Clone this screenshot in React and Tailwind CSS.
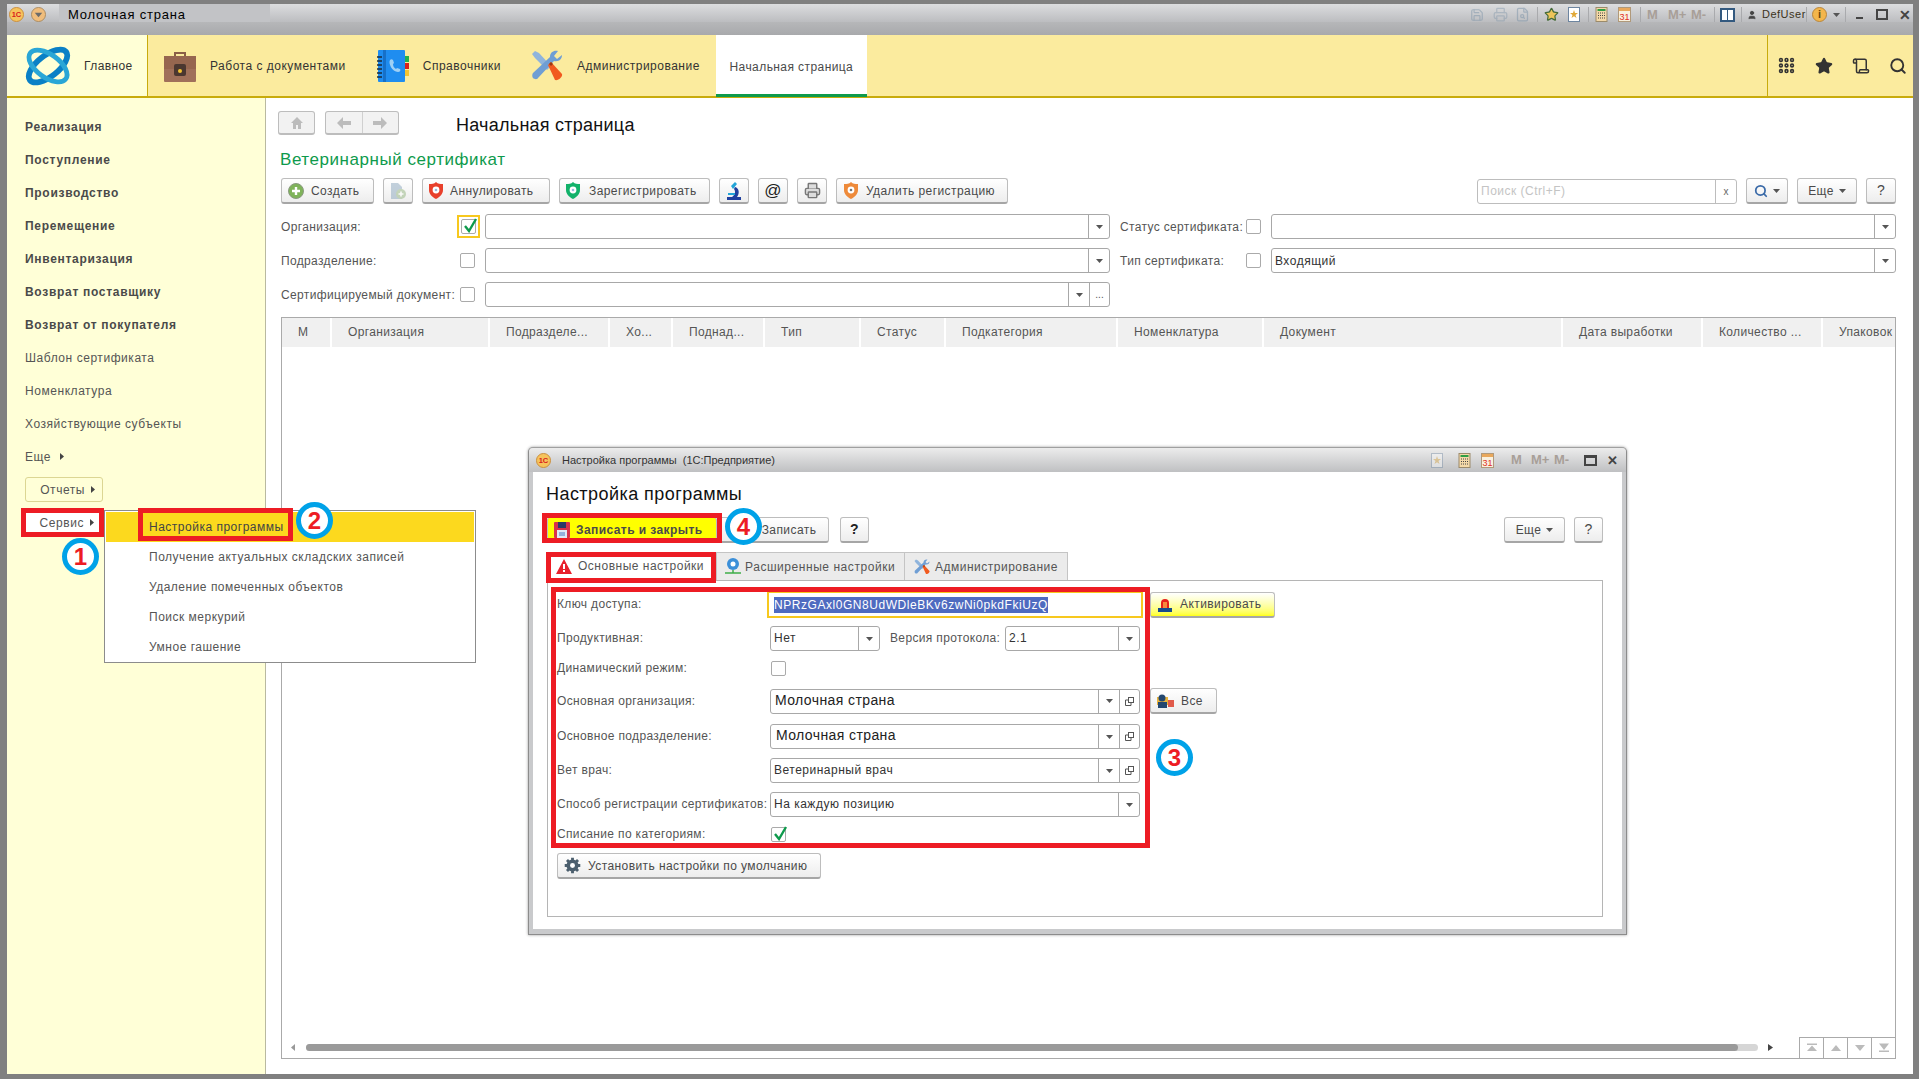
import { Grip, Search, Star, Scroll, Printer, FileSearch, Save, User } from "lucide-react";

const sideBold = ["Реализация", "Поступление", "Производство", "Перемещение", "Инвентаризация", "Возврат поставщику", "Возврат от покупателя"];
const sidePlain = ["Шаблон сертификата", "Номенклатура", "Хозяйствующие субъекты"];

const columns = [
  ["М", "w-[50px]"],
  ["Организация", "w-[158px]"],
  ["Подразделе...", "w-[120px]"],
  ["Хо...", "w-[63px]"],
  ["Поднад...", "w-[92px]"],
  ["Тип", "w-[96px]"],
  ["Статус", "w-[85px]"],
  ["Подкатегория", "w-[172px]"],
  ["Номенклатура", "w-[146px]"],
  ["Документ", "w-[299px]"],
  ["Дата выработки", "w-[140px]"],
  ["Количество ...", "w-[120px]"],
  ["Упаковок", "w-[75px]"],
];

const menuItems = ["Получение актуальных складских записей", "Удаление помеченных объектов", "Поиск меркурий", "Умное гашение"];

const Caret = ({ className = "" }) => (
  <svg width="7" height="4" viewBox="0 0 7 4" className={className}><path d="M0 0h7L3.5 4z" fill="#555" /></svg>
);

const RightCaret = ({ className = "ml-[6px]" }) => (
  <svg width="4" height="7" viewBox="0 0 4 7" className={`inline-block ${className}`}><path d="M0 0l4 3.5L0 7z" fill="#444" /></svg>
);

const Logo1C = () => (
  <svg width="15" height="15" viewBox="0 0 16 16">
    <circle cx="8" cy="8" r="7.5" fill="#f6c35c" stroke="#c98c3a" />
    <text x="8" y="11" textAnchor="middle" fontSize="8" fontWeight="700" fill="#d8201a" fontFamily="Liberation Sans">1С</text>
  </svg>
);

const MainLogo = () => (
  <svg width="48" height="44" viewBox="0 0 50 46">
    <ellipse cx="25" cy="23" rx="24" ry="11" transform="rotate(-38 25 23)" fill="none" stroke="#0a80c6" strokeWidth="6" />
    <ellipse cx="25" cy="23" rx="23" ry="12" transform="rotate(36 25 23)" fill="none" stroke="#2aa6d6" strokeWidth="5" />
  </svg>
);

const Briefcase = () => (
  <svg width="32" height="32" viewBox="0 0 32 32">
    <path d="M10 6V2h12v4h-2V4h-8v2z" fill="#8a5e46" />
    <rect x="0" y="6" width="32" height="26" rx="1" fill="#a0705a" />
    <rect x="0" y="6" width="32" height="13" fill="#96664f" />
    <rect x="10" y="14" width="12" height="12" rx="2" fill="#4b3730" />
    <circle cx="16" cy="21" r="2" fill="#f2c230" />
  </svg>
);

const Phonebook = () => (
  <svg width="32" height="32" viewBox="0 0 32 32">
    <rect x="1" y="0" width="27" height="32" rx="1" fill="#1f8df0" />
    <rect x="6" y="0" width="3" height="32" fill="#1670c8" />
    <g stroke="#1d2b3a" strokeWidth="1.4">
      <path d="M0 7h5M0 11h5M0 15h5M0 19h5M0 23h5M0 27h5" />
    </g>
    <rect x="28" y="6" width="4" height="6" fill="#22b14c" />
    <rect x="28" y="13" width="4" height="6" fill="#d8201a" />
    <rect x="28" y="20" width="4" height="6" fill="#f4c430" />
    <path d="M13 10c-2 3 2 12 8 12 2 0 3-2 2-3l-3-1-1 1c-2-1-3-3-3-5l1-1-1-3c-1-1-2-1-3 0z" fill="#9fd0f5" />
  </svg>
);

const Tools = ({ size = 32 }) => (
  <svg width={size} height={size} viewBox="0 0 32 32">
    <path d="M1 4l3-3 4 2 12 13-4 4L4 8z" fill="#8fb4dc" />
    <path d="M31 5l-5 4-3-3 4-5c-4-1-8 1-8 6l-17 16c-1 1-1 4 0 5s4 2 5 0l16-17c5 1 8-2 8-6z" fill="#6f9ed4" />
    <path d="M17 15l3-3 11 12c1 3-4 7-7 6z" fill="#f15a1e" />
    <path d="M18 14l2-2 2 2-2 2z" fill="#9a3b12" />
  </svg>
);

const Shield = ({ color, eye = "#9bd" }) => (
  <svg width="14" height="17" viewBox="0 0 14 17">
    <path d="M7 0c2 2 4 2 7 2v6c0 4-3 7-7 9-4-2-7-5-7-9V2c3 0 5 0 7-2z" fill={color} />
    <circle cx="7" cy="8" r="3.4" fill="#fff" />
    <circle cx="7" cy="8" r="1.3" fill={eye} />
  </svg>
);

const PlusCircle = () => (
  <svg width="16" height="16" viewBox="0 0 16 16">
    <circle cx="8" cy="8" r="7.5" fill="#7fb35a" stroke="#8a9a80" />
    <path d="M8 4v8M4 8h8" stroke="#fff" strokeWidth="2.4" />
  </svg>
);

const CopyDoc = () => (
  <svg width="18" height="18" viewBox="0 0 18 18" className="opacity-50">
    <path d="M2 1h7l4 4v12H2z" fill="#8aa6bd" />
    <circle cx="12" cy="12" r="5" fill="#93b57f" />
    <path d="M12 9.5v5M9.5 12h5" stroke="#fff" strokeWidth="1.6" />
  </svg>
);

const Microscope = () => (
  <svg width="16" height="19" viewBox="0 0 16 19">
    <path d="M1 16h14v3H1z" fill="#1f3f9e" />
    <path d="M5 5l4-4 2 2-4 5z" fill="#22a5d8" />
    <path d="M9 6c4 1 5 6 2 10H6c3-2 4-5 2-8z" fill="#1f3f9e" />
    <rect x="2" y="12" width="7" height="2" fill="#22a5d8" />
  </svg>
);

const Siren = () => (
  <svg width="14" height="15" viewBox="0 0 14 15">
    <path d="M3 11V6a4 4 0 018 0v5z" fill="#e8201c" />
    <rect x="5" y="5" width="4" height="6" fill="#f68a3c" />
    <rect x="0" y="11" width="14" height="4" fill="#164a8c" />
  </svg>
);

const Gear = () => (
  <svg width="17" height="17" viewBox="0 0 24 24">
    <circle cx="12" cy="12" r="8.5" fill="#4c5f6e" />
    <path d="M12 1v22M1 12h22M4.200 4.200l15.600 15.600M19.800 4.200L4.200 19.800" stroke="#4c5f6e" strokeWidth="4" />
    <circle cx="12" cy="12" r="3.5" fill="#fff" />
  </svg>
);

const Floppy = () => (
  <svg width="16" height="16" viewBox="0 0 16 16">
    <rect width="16" height="16" rx="1" fill="#d8324a" />
    <rect x="4" y="0" width="8" height="6" fill="#2b3a67" />
    <rect x="3" y="8" width="10" height="8" fill="#dfe9f5" />
    <path d="M5 11h6M5 13h6" stroke="#4a78c0" />
  </svg>
);

const Warning = () => (
  <svg width="16" height="15" viewBox="0 0 16 15">
    <path d="M8 0l8 15H0z" fill="#e8202c" />
    <path d="M7 5h2v5H7zM7 11h2v2H7z" fill="#fff" />
  </svg>
);

const Network = () => (
  <svg width="16" height="17" viewBox="0 0 16 17">
    <circle cx="8" cy="6" r="6" fill="#3b8fd8" />
    <circle cx="8" cy="6" r="2.5" fill="#fff" />
    <path d="M0 15h16M8 12v3" stroke="#3fae49" strokeWidth="1.5" />
  </svg>
);

const People = () => (
  <svg width="17" height="14" viewBox="0 0 17 14">
    <rect x="0" y="3" width="11" height="8" fill="#e8b33c" />
    <circle cx="5" cy="4" r="3.5" fill="#24476f" />
    <rect x="1" y="8" width="9" height="6" fill="#24476f" />
    <rect x="11" y="6" width="6" height="7" fill="#e05a4a" />
  </svg>
);

const OpenIcon = () => (
  <svg width="9" height="9" viewBox="0 0 9 9" fill="none" stroke="#555">
    <rect x="3.5" y="0.5" width="5" height="5" />
    <path d="M3.500 3H.5v5.500H6V5.500" />
  </svg>
);

const Check = () => (
  <svg width="15" height="15" viewBox="0 0 15 15" className="absolute left-[1px] -top-[2px]">
    <path d="M2 8l4 5 7-12" fill="none" stroke="#0e9a4c" strokeWidth="2.4" />
  </svg>
);

const Checkbox = ({ checked }) => (
  <span className="relative block w-[15px] h-[15px] rounded-[2px] border border-[#aaa] bg-white">{checked && <Check />}</span>
);

const Btn = ({ w, yellow, className = "justify-center gap-[5px]", children }) => (
  <div className={`${w} h-[26px] shrink-0 flex items-center rounded-[3px] border border-[#bdbdbd] border-b-2 border-b-[#a6a6a6] text-[12px] tracking-[0.42px] text-[#4a4a4a] ${yellow ? "bg-[#ffff00]" : "bg-linear-to-b from-white to-[#ededed]"} ${className}`}>
    {children}
  </div>
);

const Field = ({ w = "w-full", value, big, caret = true, open, dots, className = "pl-[3px] pb-[2px]" }) => (
  <div className={`${w} h-[25px] flex rounded-[3px] border border-[#a8a8a8] bg-white`}>
    <div className={`flex-1 flex items-center ${className} ${big ? "text-[14px] tracking-[0.4px] text-[#222]" : "text-[12px] tracking-[0.5px] text-[#333]"}`}>{value}</div>
    {caret && <div className="w-[21px] flex items-center justify-center border-l border-[#a8a8a8]"><Caret /></div>}
    {open && <div className="w-[20px] flex items-center justify-center border-l border-[#a8a8a8]"><OpenIcon /></div>}
    {dots && <div className="w-[20px] flex items-center justify-center border-l border-[#a8a8a8] text-[10px] text-[#555]">...</div>}
  </div>
);

const Label = ({ className = "", children }) => (
  <span className={`shrink-0 text-[12px] tracking-[0.35px] text-[#555] whitespace-nowrap ${className}`}>{children}</span>
);

const FormRow = ({ label, className = "", children }) => (
  <div className={`flex items-center ${className}`}>
    <Label className="w-[213px] pb-[1px]">{label}</Label>
    {children}
  </div>
);

const SectionTab = ({ icon, label, className = "" }) => (
  <div className={`flex items-center h-full shrink-0 ${className}`}>
    {icon}
    <span className="text-[12px] tracking-[0.5px] text-[#333] whitespace-nowrap">{label}</span>
  </div>
);

const Calc = ({ className = "" }) => (
  <svg width="13" height="15" viewBox="0 0 12 15" className={className}>
    <rect x=".5" y=".5" width="11" height="14" fill="#f4d9a8" stroke="#9b8a6a" />
    <rect x="2" y="2" width="8" height="2" fill="#2f9e44" />
    <path d="M2.500 6h7M2.500 8.500h7M2.500 11h7" stroke="#444" strokeDasharray="1 1" />
  </svg>
);

const Cal = ({ className = "" }) => (
  <svg width="13" height="15" viewBox="0 0 13 15" className={className}>
    <rect x=".5" y=".5" width="12" height="14" fill="#f9f1df" stroke="#b0997a" />
    <rect x="1" y="1" width="11" height="3" fill="#e9a85c" />
    <text x="6.5" y="13" textAnchor="middle" fontSize="9" fill="#e0301e" fontFamily="Liberation Sans">31</text>
  </svg>
);

const DocStar = ({ className = "" }) => (
  <svg width="12" height="15" viewBox="0 0 12 15" className={className}>
    <rect x=".5" y=".5" width="11" height="14" fill="#fff" stroke="#6d85a0" />
    <path d="M6 3l1 3h3L7.500 8l1 3L6 9.200 3.500 11l1-3L2 6h3z" fill="#e0a838" />
  </svg>
);

const Divider = ({ className = "" }) => <span className={`w-px h-[16px] shrink-0 bg-[#a9aaad] ${className}`} />;

const TitleBar = () => (
  <div className="h-[31px] shrink-0 flex flex-col">
    <div className="h-[18px] flex items-center bg-linear-to-b from-[#dcdddf] to-[#bcbdc0]">
      <div className="flex items-center gap-[7px] pl-[2px] pt-[2px] w-[52px] shrink-0">
        <Logo1C />
        <svg width="15" height="15" viewBox="0 0 16 16">
          <circle cx="8" cy="8" r="7.5" fill="#f0bd7c" stroke="#a98a60" />
          <path d="M4 6h8l-4 5z" fill="#6b6b6b" />
        </svg>
      </div>
      <div className="w-[211px] h-full flex items-center pl-[9px] pt-[3px] bg-[#c2c3c6] text-[13px] tracking-[0.8px] text-black">Молочная страна</div>
      <div className="ml-auto h-full flex items-center pr-[4px] pt-[3px] text-[#7b93a8]">
        <Save size={14} className="opacity-50" />
        <Printer size={15} className="ml-[9px] opacity-40" />
        <FileSearch size={15} className="ml-[7px] opacity-50" />
        <Divider className="ml-[7px]" />
        <Star size={15} fill="#ecc45a" stroke="#446b3a" className="ml-[6px]" />
        <DocStar className="ml-[9px]" />
        <Divider className="ml-[8px]" />
        <Calc className="ml-[6px]" />
        <Cal className="ml-[10px]" />
        <Divider className="ml-[9px]" />
        <span className="ml-[6px] w-[10px] text-[13px] font-bold text-[#a89f98]">M</span>
        <span className="ml-[11px] w-[16px] text-[13px] font-bold text-[#a89f98] whitespace-nowrap">M+</span>
        <span className="ml-[7px] w-[16px] text-[13px] font-bold text-[#a89f98] whitespace-nowrap">M-</span>
        <Divider className="ml-[7px]" />
        <span className="ml-[5px] w-[15px] h-[14px] bg-white border-2 border-[#33597f] flex justify-center"><span className="w-px h-full bg-[#33597f]" /></span>
        <Divider className="ml-[6px]" />
        <User size={10} fill="#444" stroke="#444" className="ml-[5px]" />
        <span className="ml-[5px] w-[39px] text-[11px] tracking-[0.5px] text-[#3b3320] whitespace-nowrap">DefUser</span>
        <Divider className="ml-[5px]" />
        <span className="ml-[5px] w-[15px] h-[15px] rounded-full bg-[#f3b64c] border border-[#b8863c] text-[11px] font-bold leading-[13px] text-center text-[#6a4a10]">i</span>
        <Caret className="ml-[6px] mr-[2px]" />
        <Divider className="ml-[3px]" />
        <span className="ml-[10px] w-[7px] h-[2px] mt-[7px] bg-[#444]" />
        <span className="ml-[13px] w-[12px] h-[11px] border-2 border-[#444]" />
        <span className="ml-[11px] w-[10px] text-[14px] font-bold leading-none text-[#444]">✕</span>
      </div>
    </div>
    <div className="flex-1 bg-linear-to-b from-[#b6b7b9] to-[#a8a9ac]" />
  </div>
);

const SectionBar = () => (
  <div className="h-[63px] shrink-0 flex bg-[#fbeb9e] border-b-2 border-[#c8ab0c]">
    <div className="w-[141px] flex items-center pl-[17px] gap-[12px] shrink-0 bg-[#ffffd6] border-r border-[#c8ab0c]">
      <MainLogo />
      <span className="text-[12px] tracking-[0.4px] text-[#333]">Главное</span>
    </div>
    <SectionTab icon={<span className="ml-[16px] mr-[14px]"><Briefcase /></span>} label="Работа с документами" />
    <SectionTab icon={<span className="ml-[31px] mr-[14px]"><Phonebook /></span>} label="Справочники" />
    <SectionTab icon={<span className="ml-[30px] mr-[14px]"><Tools /></span>} label="Администрирование" />
    <div className="ml-[16px] w-[151px] shrink-0 flex items-center justify-center pt-[4px] bg-white border-b-[3px] border-[#0e9a4c] -mb-[1px] text-[12px] tracking-[0.42px] text-[#4a4a4a]">Начальная страница</div>
    <div className="ml-auto w-[146px] shrink-0 flex items-center gap-[19px] pl-[9px] border-l border-[#c8ab0c] text-[#333]">
      <Grip size={19} strokeWidth={3.5} />
      <Star size={18} fill="#333" />
      <Scroll size={18} />
      <Search size={18} strokeWidth={2.5} />
    </div>
  </div>
);

const Sidebar = () => (
  <div className="w-[259px] shrink-0 bg-[#ffffd7] border-r border-[#b9b9a0] pt-[12px] pl-[18px] flex flex-col">
    {sideBold.map((t) => (
      <div key={t} className="h-[33px] flex items-center font-bold text-[12px] tracking-[0.7px] text-[#4a4a4a]">{t}</div>
    ))}
    {sidePlain.map((t) => (
      <div key={t} className="h-[33px] flex items-center text-[12px] tracking-[0.55px] text-[#555]">{t}</div>
    ))}
    <div className="h-[33px] flex items-center text-[12px] tracking-[0.55px] text-[#555]">Еще <RightCaret className="ml-[9px]" /></div>
    <div className="w-[78px] h-[25px] mt-[4px] flex items-center justify-end pr-[7px] rounded-[3px] border border-[#dcd693] text-[12px] tracking-[0.55px] text-[#555]">Отчеты<RightCaret /></div>
    <div className="w-[75px] h-[25px] mt-[8px] flex items-center justify-end pr-[6px] bg-white text-[12px] tracking-[0.55px] text-[#555]">Сервис<RightCaret /></div>
  </div>
);

const Filters = () => (
  <div className="mt-[10px] flex flex-col gap-[9px]">
    <div className="flex items-center">
      <Label className="w-[176px]">Организация:</Label>
      <div className="w-[28px]"><span className="block w-[23px] p-[2px] border-2 border-[#f7c81e] -mt-[1px]"><Checkbox checked /></span></div>
      <Field w="w-[625px]" />
      <Label className="w-[126px] ml-[10px]">Статус сертификата:</Label>
      <div className="w-[25px]"><Checkbox /></div>
      <Field w="flex-1" />
    </div>
    <div className="flex items-center">
      <Label className="w-[176px]">Подразделение:</Label>
      <div className="w-[28px] pl-[3px]"><Checkbox /></div>
      <Field w="w-[625px]" />
      <Label className="w-[126px] ml-[10px]">Тип сертификата:</Label>
      <div className="w-[25px]"><Checkbox /></div>
      <Field w="flex-1" value="Входящий" className="pl-[3px]" />
    </div>
    <div className="flex items-center">
      <Label className="w-[176px]">Сертифицируемый документ:</Label>
      <div className="w-[28px] pl-[3px]"><Checkbox /></div>
      <Field w="w-[625px]" dots />
    </div>
  </div>
);

const Toolbar = () => (
  <div className="mt-[8px] flex items-center gap-[9px]">
    <Btn w="w-[93px]" className="justify-start pl-[6px] gap-[7px]"><PlusCircle />Создать</Btn>
    <Btn w="w-[30px]" className="justify-center"><CopyDoc /></Btn>
    <Btn w="w-[128px]" className="justify-start pl-[6px] gap-[7px]"><Shield color="#e8402c" />Аннулировать</Btn>
    <Btn w="w-[151px]" className="justify-start pl-[6px] gap-[9px]"><Shield color="#12b26a" />Зарегистрировать</Btn>
    <Btn w="w-[30px]" className="justify-center"><Microscope /></Btn>
    <Btn w="w-[30px]" className="justify-center text-[17px] text-[#222]">@</Btn>
    <Btn w="w-[30px]" className="justify-center"><Printer size={17} stroke="#777" fill="#ddd" /></Btn>
    <Btn w="w-[172px]" className="justify-start pl-[7px] gap-[8px]"><Shield color="#ee8a3a" eye="#777" />Удалить регистрацию</Btn>
    <div className="ml-auto w-[260px] h-[25px] flex rounded-[3px] border border-[#bdbdbd]">
      <span className="flex-1 flex items-center pl-[3px] text-[12px] tracking-[0.5px] text-[#c4c4c4]">Поиск (Ctrl+F)</span>
      <span className="w-[21px] flex items-center justify-center border-l border-[#bdbdbd] text-[10px] text-[#666]">x</span>
    </div>
    <Btn w="w-[42px]"><Search size={14} stroke="#3a6aa8" strokeWidth={3} /><Caret /></Btn>
    <Btn w="w-[60px]">Еще<Caret /></Btn>
    <Btn w="w-[30px]" className="justify-center text-[14px]">?</Btn>
  </div>
);

const Table = () => (
  <div className="mt-[10px] flex-1 flex flex-col border border-[#aaa] overflow-hidden">
    <div className="h-[29px] flex bg-[#f0f0f0]">
      {columns.map(([t, w]) => (
        <div key={t} className={`${w} shrink-0 flex items-center pl-[16px] pb-[1px] border-r-2 border-white text-[12px] tracking-[0.35px] text-[#555] whitespace-nowrap overflow-hidden`}>{t}</div>
      ))}
    </div>
    <div className="flex-1" />
    <div className="h-[21px] flex items-center">
      <svg width="4" height="7" viewBox="0 0 4 7" className="ml-[9px]"><path d="M4 0L0 3.5 4 7z" fill="#999" /></svg>
      <div className="ml-[11px] w-[1452px] h-[7px] rounded-full bg-[#d6d6d6]">
        <div className="w-[1432px] h-full rounded-full bg-[#9a9a9a]" />
      </div>
      <svg width="5" height="7" viewBox="0 0 5 7" className="ml-[10px]"><path d="M0 0l5 3.5L0 7z" fill="#444" /></svg>
      <div className="ml-auto h-full flex border-t border-[#aaa]">
        {["M2 1.500h10V3H2zM7 3.500l5 5.500H2z", "M7 3l5 6H2z", "M2 3h10L7 9z", "M2 1.500h10L7 8zM2 8.500h10V10H2z"].map((d) => (
          <div key={d} className="w-[24px] flex items-center justify-center border-l border-[#aaa]">
            <svg width="14" height="12" viewBox="0 0 14 12"><path d={d} fill="#bbb" /></svg>
          </div>
        ))}
      </div>
    </div>
  </div>
);

const Dialog = () => (
  <div className="absolute left-[528px] top-[447px] w-[1099px] h-[488px] flex flex-col rounded-t-[5px] border border-[#8c8c8c] border-t-[#a0a0a0] bg-[#c9cacc] shadow-[0_0_3px_#999]">
    <div className="h-[24px] shrink-0 flex items-center pl-[7px] bg-linear-to-b from-[#ececec] to-[#bfc0c2] rounded-t-[4px]">
      <Logo1C />
      <span className="ml-[11px] text-[11px] text-[#333]">Настройка программы&nbsp; (1С:Предприятие)</span>
      <div className="ml-auto flex items-center pr-[10px]">
        <DocStar className="opacity-40" />
        <Calc className="ml-[15px]" />
        <Cal className="ml-[10px]" />
        <span className="ml-[17px] w-[10px] text-[13px] font-bold text-[#a89f98]">M</span>
        <span className="ml-[10px] w-[16px] text-[13px] font-bold text-[#a89f98] whitespace-nowrap">M+</span>
        <span className="ml-[7px] w-[15px] text-[13px] font-bold text-[#a89f98] whitespace-nowrap">M-</span>
        <span className="w-[13px] h-[11px] ml-[15px] border-2 border-t-[3px] border-[#444]" />
        <span className="ml-[10px] w-[9px] text-[13px] font-bold leading-none text-[#444]">✕</span>
      </div>
    </div>
    <div className="flex-1 mx-[4px] mb-[5px] bg-white pl-[14px] pr-[19px] flex flex-col">
      <div className="h-[45px] flex items-center pb-[1px] pt-[1px] -ml-[1px] text-[18px] text-[#111] tracking-[0.45px]">Настройка программы</div>
      <div className="flex items-center">
        <Btn w="w-[170px]" yellow className="font-bold justify-start pl-[6px] gap-[6px] tracking-[0.9px]"><Floppy />Записать и закрыть</Btn>
        <Btn w="w-[112px]" className="justify-center"><span className="ml-[32px]">Записать</span></Btn>
        <Btn w="w-[29px]" className="justify-center ml-[11px] text-[14px] font-bold text-[#222]">?</Btn>
        <Btn w="w-[61px]" className="justify-center gap-[5px] ml-auto">Еще<Caret /></Btn>
        <Btn w="w-[29px]" className="justify-center ml-[9px] text-[14px]">?</Btn>
      </div>
      <div className="mt-[9px] h-[28px] flex">
        <div className="w-[169px] flex items-center pl-[9px] gap-[6px] text-[12px] tracking-[0.5px] text-[#555] bg-white"><Warning />Основные настройки</div>
        <div className="w-[189px] flex items-center pl-[8px] gap-[4px] text-[12px] tracking-[0.55px] text-[#555] bg-[#ebebeb] border border-b-0 border-[#c4c4c4]"><Network />Расширенные настройки</div>
        <div className="w-[163px] flex items-center pl-[9px] gap-[5px] text-[12px] tracking-[0.5px] text-[#555] bg-[#ebebeb] border border-b-0 border-l-0 border-[#c4c4c4]"><Tools size={16} />Администрирование</div>
      </div>
      <div className="h-[337px] border border-[#b5b5b5] pl-[9px] pt-[10px] flex flex-col">
        <FormRow label="Ключ доступа:" className="h-[27px]">
          <div className="w-[376px] h-[27px] -ml-[3px] flex items-center pl-[5px] border-2 border-[#f7c81e] text-[12px] tracking-[0.55px]">
            <span className="bg-[#4f6bc0] text-white leading-[16px]">NPRzGAxl0GN8UdWDleBKv6zwNi0pkdFkiUzQ</span>
          </div>
          <Btn w="w-[125px]" className="ml-[7px] justify-start pl-[7px] gap-[8px] bg-linear-to-b from-[#ffff33] to-[#ffff00]"><Siren />Активировать</Btn>
        </FormRow>
        <FormRow label="Продуктивная:" className="mt-[8px]">
          <Field w="w-[110px]" value="Нет" />
          <Label className="ml-[10px] mr-[2px] w-[113px] pb-[1px]">Версия протокола:</Label>
          <Field w="w-[135px]" value="2.1" />
        </FormRow>
        <FormRow label="Динамический режим:" className="mt-[10px] h-[15px]">
          <span className="ml-[1px]"><Checkbox /></span>
        </FormRow>
        <FormRow label="Основная организация:" className="mt-[12px]">
          <Field w="w-[370px]" value="Молочная страна" big open className="pl-[4px] pb-[2px]" />
          <Btn w="w-[67px]" className="ml-[10px] justify-start pl-[6px] gap-[7px]"><People />Все</Btn>
        </FormRow>
        <FormRow label="Основное подразделение:" className="mt-[10px]">
          <Field w="w-[370px]" value="Молочная страна" big open className="pl-[5px] pb-[2px]" />
        </FormRow>
        <FormRow label="Вет врач:" className="mt-[9px]">
          <Field w="w-[370px]" value="Ветеринарный врач" open />
        </FormRow>
        <FormRow label="Способ регистрации сертификатов:" className="mt-[9px]">
          <Field w="w-[370px]" value="На каждую позицию" />
        </FormRow>
        <FormRow label="Списание по категориям:" className="mt-[10px] h-[15px]">
          <span className="ml-[1px]"><Checkbox checked /></span>
        </FormRow>
        <Btn w="w-[264px]" className="mt-[11px] justify-start pl-[6px] gap-[7px]"><Gear />Установить настройки по умолчанию</Btn>
      </div>
    </div>
  </div>
);

const Menu = () => (
  <div className="absolute left-[104px] top-[510px] w-[372px] h-[153px] bg-white border border-[#8c8c8c] flex flex-col px-px pt-px">
    <div className="h-[30px] flex items-center pl-[43px] bg-[#fcd91e] text-[12px] tracking-[0.5px] text-[#444]">Настройка программы</div>
    {menuItems.map((t) => (
      <div key={t} className="h-[30px] flex items-center pl-[43px] text-[12px] tracking-[0.5px] text-[#555]">{t}</div>
    ))}
  </div>
);

const RedBox = ({ className }) => (
  <div className={`absolute border-[5px] border-[#ed1c24] ${className}`} />
);

const Badge = ({ className, n }) => (
  <div className={`absolute flex items-center justify-center w-[37px] h-[37px] rounded-full bg-white border-[5px] border-[#00a2e8] font-bold text-[24px] leading-none text-[#ed1c24] ${className}`}>{n}</div>
);

export default function App() {
  return (
    <div className="relative w-[1919px] h-[1079px] overflow-hidden bg-[#808080] pt-[4px] pl-[7px] pr-[6px] pb-[5px] flex flex-col font-['Liberation_Sans',Arial,sans-serif]">
      <TitleBar />
      <SectionBar />
      <div className="flex-1 min-h-0 flex">
        <Sidebar />
        <div className="flex-1 min-w-0 bg-white pl-[15px] pr-[17px] pb-[15px] pt-[13px] flex flex-col">
          <div className="flex items-center -ml-[3px] h-[24px]">
            <div className="w-[37px] h-[24px] flex items-center justify-center rounded-[3px] border border-[#bdbdbd] border-b-2 bg-[#f2f2f2]">
              <svg width="14" height="14" viewBox="0 0 14 14"><path d="M7 1l6 6h-2v6H8V9H6v4H3V7H1z" fill="#bcbcbc" /></svg>
            </div>
            <div className="ml-[10px] w-[74px] h-[24px] flex rounded-[3px] border border-[#bdbdbd] border-b-2 bg-[#f2f2f2]">
              <div className="flex-1 flex items-center justify-center border-r border-[#d0d0d0]">
                <svg width="14" height="12" viewBox="0 0 14 12"><path d="M6 0v4h8v4H6v4L0 6z" fill="#bcbcbc" /></svg>
              </div>
              <div className="flex-1 flex items-center justify-center">
                <svg width="14" height="12" viewBox="0 0 14 12"><path d="M8 0v4H0v4h8v4l6-6z" fill="#bcbcbc" /></svg>
              </div>
            </div>
            <h1 className="ml-[57px] mt-[3px] text-[18px] tracking-[0.25px] leading-none text-[#111]">Начальная страница</h1>
          </div>
          <div className="mt-[15px] -ml-[1px] h-[20px] flex items-center text-[17px] tracking-[0.55px] text-[#0e9a4c]">Ветеринарный сертификат</div>
          <Toolbar />
          <Filters />
          <Table />
        </div>
      </div>
      <Dialog />
      <Menu />
      <RedBox className="left-[21px] top-[508px] w-[83px] h-[29px]" />
      <RedBox className="left-[138px] top-[508px] w-[155px] h-[33px]" />
      <RedBox className="left-[542px] top-[513px] w-[180px] h-[30px]" />
      <RedBox className="left-[546px] top-[552px] w-[170px] h-[31px]" />
      <RedBox className="left-[551px] top-[587px] w-[599px] h-[261px]" />
      <Badge className="left-[62px] top-[538px]" n="1" />
      <Badge className="left-[296px] top-[502px]" n="2" />
      <Badge className="left-[1156px] top-[739px]" n="3" />
      <Badge className="left-[725px] top-[508px]" n="4" />
    </div>
  );
}
